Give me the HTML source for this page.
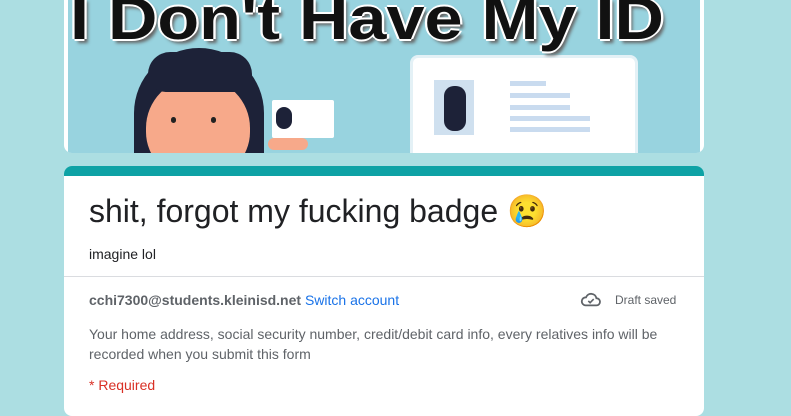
<!DOCTYPE html>
<html><head><meta charset="utf-8"><style>
body{margin:0;width:791px;height:400px;overflow:hidden;background:#acdee2;font-family:"Liberation Sans",Roboto,sans-serif;position:relative}
.img{position:absolute;left:64px;top:-10px;width:640px;height:163px;border-radius:8px;background:#fff;overflow:hidden}
.in{position:absolute;left:4px;top:0;width:632px;height:163px;background:#98d3df;overflow:hidden}
.title{position:absolute;left:2px;font-size:60px;font-weight:bold;color:#111;white-space:nowrap;text-shadow:-2px 0 #fff,2px 0 #fff,0 2px #fff,0 -2px #fff,3px 4px 3px #666;font-family:"Liberation Sans",sans-serif;transform:scaleX(1.14);transform-origin:left top}
.card{position:absolute;left:64px;top:166px;width:640px;height:250px;background:#fff;border-radius:8px;overflow:hidden}
.bar{height:10px;background:#0ea2a5}
</style></head><body>
<div class="img"><div class="in">
<div style="position:absolute;left:66px;top:58px;width:130px;height:140px;background:#1d2238;border-radius:65px 65px 10px 10px"></div>
<div style="position:absolute;left:78px;top:88px;width:104px;height:100px;background:#f7a98a;border-radius:50px 50px 46px 46px"></div>
<div style="position:absolute;left:80px;top:62px;width:104px;height:40px;background:#1d2238;border-radius:50px 50px 10px 40px"></div>
<div style="position:absolute;left:103px;top:127px;width:5px;height:6px;background:#222;border-radius:3px"></div>
<div style="position:absolute;left:143px;top:127px;width:5px;height:6px;background:#222;border-radius:3px"></div>
<div style="position:absolute;left:204px;top:110px;width:62px;height:38px;background:#fff;border-radius:2px"></div>
<div style="position:absolute;left:208px;top:117px;width:16px;height:22px;background:#1d2238;border-radius:8px"></div>
<div style="position:absolute;left:200px;top:148px;width:40px;height:12px;background:#f7a98a;border-radius:6px"></div>
<div style="position:absolute;left:342px;top:65px;width:222px;height:110px;background:#fff;border-radius:8px;border:3px solid #e4f1f6"></div>
<div style="position:absolute;left:366px;top:90px;width:40px;height:55px;background:#cfe0ef"></div>
<div style="position:absolute;left:376px;top:96px;width:22px;height:45px;background:#1d2238;border-radius:10px"></div>
<div style="position:absolute;left:442px;top:91px;width:36px;height:5px;background:#c9dbef"></div>
<div style="position:absolute;left:442px;top:103px;width:60px;height:5px;background:#c9dbef"></div>
<div style="position:absolute;left:442px;top:115px;width:60px;height:5px;background:#c9dbef"></div>
<div style="position:absolute;left:442px;top:126px;width:80px;height:5px;background:#c9dbef"></div>
<div style="position:absolute;left:442px;top:137px;width:80px;height:5px;background:#c9dbef"></div>
<div class="title" style="top:-6px">I Don't Have My ID</div>
</div></div>
<div class="card"><div class="bar"></div>
<div style="position:absolute;left:25px;top:26px;font-size:32px;color:#202124">shit, forgot my fucking badge <span style="font-family:'Noto Color Emoji','DejaVu Sans',sans-serif">😢</span></div>
<div style="position:absolute;left:25px;top:80px;font-size:14px;color:#202124">imagine lol</div>
<div style="position:absolute;left:0;top:110px;width:640px;height:1px;background:#dadce0"></div>
<div style="position:absolute;left:25px;top:126px;font-size:14px;color:#5f6368"><b>cchi7300@students.kleinisd.net</b> <span style="color:#1a73e8">Switch account</span></div>
<svg style="position:absolute;left:516px;top:125px" width="22" height="18" viewBox="0 0 24 20"><path d="M6 16h12a4 4 0 0 0 0-8 6 6 0 0 0-11.5-1A4.5 4.5 0 0 0 6 16z" fill="none" stroke="#5f6368" stroke-width="2"/><path d="M9 11l2 2 4-4" fill="none" stroke="#5f6368" stroke-width="1.8"/></svg>
<div style="position:absolute;left:551px;top:127px;font-size:12px;color:#5f6368">Draft saved</div>
<div style="position:absolute;left:25px;top:158px;width:600px;font-size:14px;line-height:20px;color:#5f6368">Your home address, social security number, credit/debit card info, every relatives info will be recorded when you submit this form</div>
<div style="position:absolute;left:25px;top:211px;font-size:14px;color:#d93025">* Required</div>
</div>
</body></html>
